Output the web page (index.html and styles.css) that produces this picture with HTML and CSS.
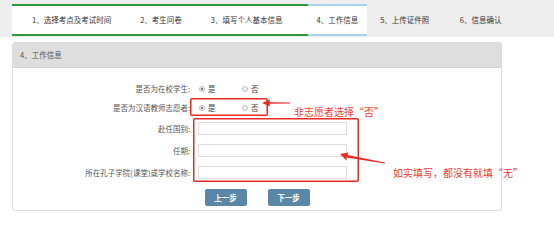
FILE: index.html
```html
<!DOCTYPE html>
<html lang="zh-CN">
<head>
  <meta charset="UTF-8" />
  <title>报名 - 工作信息</title>
  <link rel="stylesheet" href="styles.css">
</head>
<body>
  <div class="steps">
    <div class="step done first">1、选择考点及考试时间</div>
    <div class="step done">2、考生问卷</div>
    <div class="step done last">3、填写个人基本信息</div>
    <div class="step current">4、工作信息</div>
    <div class="step">5、上传证件照</div>
    <div class="step">6、信息确认</div>
  </div>

  <div class="panel">
    <div class="panel-head">4、工作信息</div>
    <div class="panel-body">
      <div class="row radio-row">
        <span class="lbl">是否为在校学生:</span>
        <span class="radio checked"></span><span class="opt">是</span>
        <span class="radio"></span><span class="opt">否</span>
      </div>
      <div class="row radio-row">
        <span class="lbl">是否为汉语教师志愿者:</span>
        <span class="radio checked"></span><span class="opt">是</span>
        <span class="radio"></span><span class="opt">否</span>
      </div>
      <div class="row input-row">
        <span class="lbl">赴任国别:</span>
        <input type="text">
      </div>
      <div class="row input-row">
        <span class="lbl">任期:</span>
        <input type="text">
      </div>
      <div class="row input-row">
        <span class="lbl">所在孔子学院(课堂)或学校名称:</span>
        <input type="text">
      </div>
      <div class="btns">
        <button class="btn">上一步</button>
        <button class="btn">下一步</button>
      </div>
    </div>
  </div>

  <!-- 标注：红框、箭头和说明文字 -->
  <svg class="marks" width="554" height="247" viewBox="0 0 554 247">
    <rect x="190.75" y="98.75" width="76.5" height="16.5" rx="1" fill="none" stroke="#ea2a22" stroke-width="1.5"/>
    <rect x="193.75" y="118.75" width="164.5" height="62.5" rx="1" fill="none" stroke="#ea2a22" stroke-width="1.5"/>
    <polygon points="262,103 270,99.5 269.5,102.2 290,102.6 290,103.4 269.5,103.8 270,106.5" fill="#ea2a22"/>
    <polygon points="340,154 348.3,152.4 347.4,155 385,162.6 384.8,163.4 346.6,157.6 346.6,160.4" fill="#ea2a22"/>
  </svg>
  <div class="note note-1">非志愿者选择“否”</div>
  <div class="note note-2">如实填写，都没有就填“无”</div>
</body>
</html>
```

FILE: styles.css
```css
body { margin: 0; position: relative; width: 554px; height: 247px; overflow: hidden; background: #fff; font-family: "Noto Sans CJK SC", "Noto Sans", sans-serif; color: #555; font-size: 7.5px; }

.steps { display: flex; height: 37px; padding-left: 12px; background: #eee; }
.step { box-sizing: border-box; height: 32px; margin-top: 4px; padding: 0 14.5px; line-height: 28px; color: #333; white-space: nowrap; border-top: 2px solid transparent; border-bottom: 2px solid transparent; }
.step.done { background: #fff; border-color: #2f9a3a; }
.step.first { padding-left: 20px; }
.step.last { padding-right: 25px; }
.step.current { background: #fff; border-color: #a9d2ee; padding: 0 9px; }
.step.current + .step { padding-left: 13px; padding-right: 16px; }

.panel { box-sizing: border-box; width: 490px; margin: 5px 0 0 12px; border: 1px solid #ddd; border-radius: 3px; }
.panel-head { height: 24px; line-height: 24px; padding-left: 7px; background: #dedede; border-bottom: 1px solid #d2d2d2; color: #555; }
.panel-body { padding-top: 11px; padding-bottom: 4px; }

.row { display: flex; align-items: center; }
.radio-row { height: 19px; }
.input-row { height: 22px; }
.lbl { width: 177px; text-align: right; margin-right: 9px; flex: none; }
.radio { box-sizing: border-box; width: 6px; height: 6px; border: 1px solid #bbb; border-radius: 50%; background: #f4f4f4; position: relative; flex: none; }
.radio.checked::after { content: ""; position: absolute; left: 1px; top: 1px; width: 2px; height: 2px; border-radius: 50%; background: #555; }
.opt { margin-left: 3px; width: 34px; color: #444; }
input { box-sizing: border-box; width: 149px; height: 13px; margin: 0 0 0 -1px; padding: 0 3px; border: 1px solid #ddd; font-size: 7.5px; }

.btns { display: flex; justify-content: center; gap: 21px; margin-top: 6px; }
.btn { width: 42px; height: 17px; padding: 0; border: none; border-radius: 2px; background: #5b87a6; color: #fff; font-family: inherit; font-size: 7.5px; font-weight: bold; }

.marks { position: absolute; left: 0; top: 0; }
.note { position: absolute; color: #f03c36; font-size: 10px; line-height: 12px; white-space: nowrap; }
.note-1 { left: 294px; top: 106px; }
.note-2 { left: 393px; top: 167px; }
```
